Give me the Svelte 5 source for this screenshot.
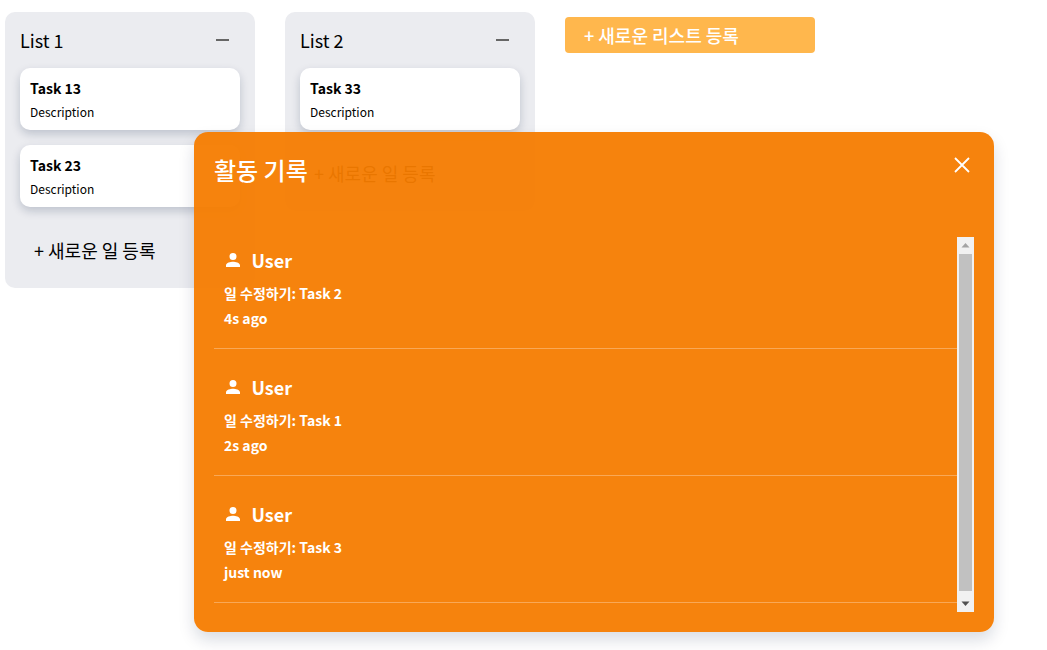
<script>
  const lists = [
    { title: 'List 1', tasks: ['Task 13', 'Task 23'] },
    { title: 'List 2', tasks: ['Task 33'] }
  ];
  const logs = [
    { action: '일 수정하기: Task 2', time: '4s ago' },
    { action: '일 수정하기: Task 1', time: '2s ago' },
    { action: '일 수정하기: Task 3', time: 'just now' }
  ];
</script>

<main class="board">
  {#each lists as list}
    <section class="list">
      <header class="list-head">
        <h2>{list.title}</h2>
        <button class="collapse" aria-label="접기"><span></span></button>
      </header>
      {#each list.tasks as task}
        <article class="card">
          <h3>{task}</h3>
          <p>Description</p>
        </article>
      {/each}
      <button class="add-task">+ 새로운 일 등록</button>
    </section>
  {/each}
  <button class="add-list">+ 새로운 리스트 등록</button>
</main>

<aside class="activity">
  <header class="activity-head">
    <h2>활동 기록</h2>
    <button class="close" aria-label="닫기">
      <svg width="16" height="16" viewBox="0 0 16 16"><path d="M1 1 15 15M15 1 1 15" stroke="#fff" stroke-width="1.8" fill="none" /></svg>
    </button>
  </header>
  <div class="log-area">
    <ul class="logs">
      {#each logs as log}
        <li>
          <div class="user">
            <svg width="14" height="14" viewBox="4 4 16 16"><path fill="#fff" d="M12 12a4 4 0 1 0 0-8 4 4 0 0 0 0 8zm0 2c-2.7 0-8 1.300-8 4v2h16v-2c0-2.700-5.300-4-8-4z" /></svg>
            <span>User</span>
          </div>
          <p>{log.action}</p>
          <p>{log.time}</p>
        </li>
      {/each}
    </ul>
    <!-- the headless browser hides native scrollbars, so this one is drawn -->
    <div class="scrollbar" aria-hidden="true">
      <svg class="arrow" width="17" height="17" viewBox="0 0 17 17"><path d="M8.5 6 12.500 10.500H4.500z" fill="#a3a3a3" /></svg>
      <div class="thumb"></div>
      <svg class="arrow" width="17" height="17" viewBox="0 0 17 17"><path d="M4.500 6.500H12.500L8.500 11z" fill="#505050" /></svg>
    </div>
  </div>
</aside>

<style>
  :global(body) {
    font-family: "Noto Sans CJK KR", "Noto Sans", sans-serif;
    background: #fff;
  }

  .board {
    display: flex;
    align-items: flex-start;
    gap: 30px;
    padding: 12px 0 0 5px;
  }

  .list {
    width: 250px;
    box-sizing: border-box;
    background: #ebecf0;
    border-radius: 10px;
    padding: 10px 15px 20px;
  }

  .list-head {
    display: flex;
    align-items: center;
    justify-content: space-between;
    height: 36px;
    margin-bottom: 10px;
  }

  h2 {
    margin: 0;
    font-weight: 400;
  }

  .list-head h2 {
    font-size: 18px;
    color: #000;
  }

  .collapse {
    width: 36px;
    height: 36px;
    border: 0;
    background: none;
    padding: 0 11px 0 0;
    display: flex;
    align-items: center;
    justify-content: flex-end;
  }

  .collapse span {
    width: 13px;
    height: 2px;
    background: #666;
  }

  .card {
    background: #fff;
    border-radius: 10px;
    height: 62px;
    box-sizing: border-box;
    padding: 10px;
    margin-bottom: 15px;
    box-shadow: 0 4px 10px rgba(9, 30, 66, 0.2);
  }

  .card h3 {
    margin: 0;
    font-size: 14px;
    line-height: 20px;
    font-weight: 700;
    color: #000;
  }

  .card p {
    margin: 5px 0 0;
    font-size: 12px;
    line-height: 18px;
    color: #000;
  }

  .add-task {
    display: block;
    width: 100%;
    height: 36px;
    margin-top: 25px;
    padding: 0 14px;
    border: 0;
    background: none;
    text-align: left;
    font: inherit;
    font-size: 18px;
    color: #000;
  }

  .add-list {
    width: 250px;
    height: 36px;
    margin-top: 5px;
    padding: 0 19px;
    border: 0;
    border-radius: 4px;
    background: #ffb74d;
    color: #fff;
    text-align: left;
    font: inherit;
    font-size: 18px;
    font-weight: 500;
  }

  .activity {
    position: absolute;
    left: 194px;
    top: 132px;
    width: 800px;
    height: 500px;
    box-sizing: border-box;
    padding: 20px;
    border-radius: 14px;
    background: rgba(245, 124, 0, 0.95);
    color: #fff;
    box-shadow: 0 8px 16px rgba(9, 30, 66, 0.15);
  }

  .activity-head {
    display: flex;
    align-items: flex-start;
    justify-content: space-between;
    height: 36px;
    margin-bottom: 49px;
  }

  .activity-head h2 {
    font-size: 24px;
    line-height: 36px;
    font-weight: 500;
  }

  .close {
    border: 0;
    background: none;
    padding: 0;
    margin: 5px 4px 0 0;
    height: 16px;
    line-height: 0;
  }

  .log-area {
    display: flex;
    height: 375px;
  }

  .logs {
    flex: 1;
    list-style: none;
    margin: 0;
    padding: 0;
  }

  .logs li {
    height: 127px;
    box-sizing: border-box;
    padding: 25px 10px 0;
    border-bottom: 1px solid rgba(255, 255, 255, 0.3);
  }

  .logs li:first-child {
    height: 112px;
    padding-top: 10px;
  }

  .scrollbar {
    width: 17px;
    display: flex;
    flex-direction: column;
    background: #f1f1f1;
  }

  .arrow {
    display: block;
    flex: none;
  }

  .thumb {
    height: 337px;
    margin: 0 2px 4px;
    background: #c1c1c1;
  }

  .user {
    display: flex;
    align-items: center;
    gap: 11.5px;
    height: 26px;
    margin-bottom: 8px;
    padding-left: 2px;
    font-size: 18px;
    font-weight: 700;
  }

  .logs p {
    margin: 0;
    font-size: 14px;
    line-height: 25px;
    font-weight: 700;
  }
</style>
